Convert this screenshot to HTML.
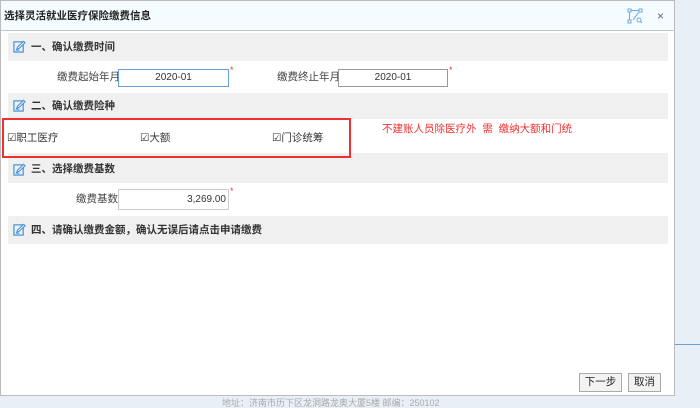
<!DOCTYPE html>
<html><head><meta charset="utf-8"><style>
*{margin:0;padding:0;box-sizing:border-box}
body{width:700px;height:406px;background:#e8eff7;position:relative;overflow:hidden;font-family:"Liberation Sans","Noto Sans CJK SC",sans-serif;font-size:11px;color:#333}
.dlg{position:absolute;left:0;top:0;width:675px;height:396px;background:#fff;border:1px solid #bbb}
.title{position:absolute;left:0;top:0;width:673px;height:30px;background:#f5fcff;border-bottom:1px solid #c8c8c8;font-size:10.5px;font-weight:bold;line-height:30px;padding-left:3px;color:#222}
.hd{position:absolute;left:7px;width:660px;background:#f0f0f0;font-weight:bold;font-size:10.5px;color:#333;padding-left:23px}
.ic{position:absolute;left:5px}
.lab{position:absolute;font-size:10.5px;color:#444;line-height:14px}
.inp{position:absolute;height:18px;border:1px solid #999;background:#fff;text-align:center;line-height:16px;font-size:10px;color:#333}
.star{position:absolute;color:#e33;font-size:9px}
.cb{position:absolute;font-size:10.5px;color:#333}
.btn{position:absolute;height:19px;border:1px solid #aaa;background:#f3f3f3;font-size:10.5px;text-align:center;line-height:17px;color:#222}
</style></head><body>
<div style="position:absolute;left:675px;top:344px;width:25px;height:1px;background:#6aa0d8"></div>
<div class="dlg">
<div class="title">选择灵活就业医疗保险缴费信息
<svg style="position:absolute;left:626px;top:7px" width="16" height="16" viewBox="0 0 16 16" fill="none" stroke="#6aa8e0" stroke-width="1"><rect x="1" y="1" width="3" height="3"/><rect x="12" y="1" width="3" height="3"/><rect x="1" y="12" width="3" height="3"/><line x1="4" y1="2.5" x2="12" y2="2.5"/><line x1="2.5" y1="4" x2="2.5" y2="12"/><line x1="12" y1="4" x2="6" y2="12"/><circle cx="12" cy="12" r="2"/><line x1="13.5" y1="13.5" x2="15" y2="15"/></svg>
<span style="position:absolute;left:656px;top:0;font-weight:normal;color:#666;font-size:12px">×</span></div>
<svg width="0" height="0" style="position:absolute"><defs><symbol id="ed" viewBox="0 0 14 14"><rect x="1" y="2" width="10" height="11" fill="#eaf3fc" stroke="#4a90d9" stroke-width="1.3"/><path d="M4 10 L5 7.5 L11.5 1.5 L13 3 L6.5 9 Z" fill="#fff" stroke="#4a90d9" stroke-width="1.2"/><line x1="3" y1="11" x2="7" y2="11" stroke="#4a90d9"/></symbol></defs></svg>
<div class="hd" style="top:32px;height:28px;line-height:28px"><svg class="ic" style="top:7px" width="13" height="13"><use href="#ed"/></svg>一、确认缴费时间</div>
<span class="lab" style="left:56px;top:69px">缴费起始年月</span>
<div class="inp" style="left:117px;top:68px;width:111px;border-color:#6aa0d8">2020-01</div><span class="star" style="left:229px;top:64px">*</span>
<span class="lab" style="left:276px;top:69px">缴费终止年月</span>
<div class="inp" style="left:337px;top:68px;width:110px">2020-01</div><span class="star" style="left:448px;top:64px">*</span>
<div class="hd" style="top:92px;height:26px;line-height:26px"><svg class="ic" style="top:6px" width="13" height="13"><use href="#ed"/></svg>二、确认缴费险种</div>
<div style="position:absolute;left:7px;top:152px;width:660px;height:3px;background:#f0f0f0"></div>
<span class="cb" style="left:6px;top:129px">☑职工医疗</span>
<span class="cb" style="left:139px;top:129px">☑大额</span>
<span class="cb" style="left:271px;top:129px">☑门诊统筹</span>
<span style="position:absolute;left:381px;top:120px;color:#f03030;font-size:10.5px">不建账人员除医疗外&nbsp; 需&nbsp; 缴纳大额和门统</span>
<div class="hd" style="top:155px;height:27px;line-height:27px"><svg class="ic" style="top:7px" width="13" height="13"><use href="#ed"/></svg>三、选择缴费基数</div>
<span class="lab" style="left:75px;top:191px">缴费基数</span>
<div class="inp" style="left:117px;top:188px;width:111px;height:21px;border-color:#ccc;text-align:right;padding-right:2px;line-height:19px">3,269.00</div><span class="star" style="left:229px;top:185px">*</span>
<div class="hd" style="top:215px;height:28px;line-height:28px"><svg class="ic" style="top:7px" width="13" height="13"><use href="#ed"/></svg>四、请确认缴费金额，确认无误后请点击申请缴费</div>
<div class="btn" style="left:578px;top:372px;width:43px">下一步</div>
<div class="btn" style="left:627px;top:372px;width:33px">取消</div>
</div>
<span style="position:absolute;left:222px;top:398px;color:#aaa;font-size:9px;line-height:10px">地址：济南市历下区龙洞路龙奥大厦5楼 邮编：250102</span>
<div style="position:absolute;left:2px;top:118px;width:349px;height:40px;border:2px solid #f03030"></div>
</body></html>
